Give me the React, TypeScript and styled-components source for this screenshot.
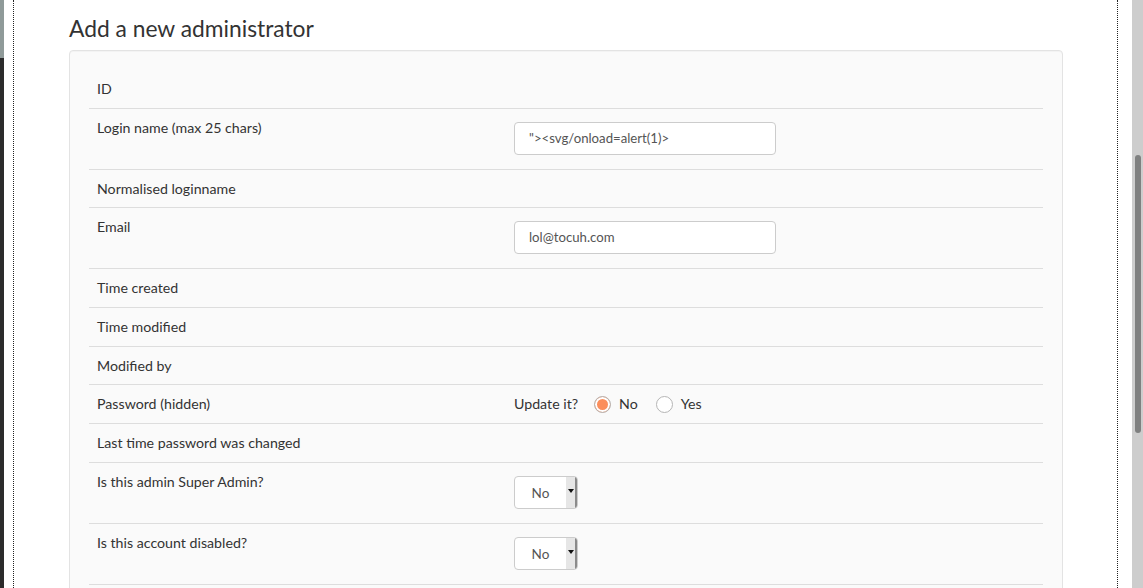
import React from "react";
import styled, { createGlobalStyle } from "styled-components";

const Global = createGlobalStyle`
  html, body { margin: 0; padding: 0; background: #fff; }
  body { font-family: Lato, "Liberation Sans", sans-serif; color: #333; overflow: hidden; }
  * { box-sizing: border-box; }
`;

const Screen = styled.div`
  display: flex;
  height: 588px;
  overflow: hidden;
`;

const LeftStrip = styled.div`
  width: 4px;
  flex: none;
  background: linear-gradient(#8f9a99 0 58px, #2b2b2b 58px 100%);
`;

const Gutter = styled.div<{ $w: number }>`
  width: ${(p) => p.$w}px;
  flex: none;
`;

const Frame = styled.div`
  flex: 1;
  border-left: 1px dotted #222;
  border-right: 1px dotted #222;
  padding: 12px 54px 0 55px;
  min-width: 0;
`;

const Scrollbar = styled.div`
  width: 11px;
  flex: none;
  background: #cdcdcd;
  padding: 155px 2px 0 3px;
`;

const Thumb = styled.div`
  height: 278px;
  background: #7f8080;
  border-radius: 3px;
`;

const Title = styled.h1`
  margin: 0 0 6px;
  font-size: 22.8px;
  line-height: 32px;
  font-weight: 400;
  color: #333;
`;

const Panel = styled.div`
  background: #fafafa;
  border: 1px solid #e3e3e3;
  border-radius: 4px;
  padding: 19px 19px 19px;
  box-shadow: inset 0 1px 1px rgba(0, 0, 0, 0.03);
`;

const Row = styled.div`
  display: grid;
  grid-template-columns: 417px 1fr;
  border-bottom: 1px solid #dddddd;
  font-size: 14.2px;
  line-height: 21.68px;
`;

const Label = styled.div`
  padding: 8px;
  color: #333;
`;

const Value = styled.div`
  padding: 8px;
  display: flex;
  align-items: flex-start;
`;

const TextInput = styled.div`
  margin: 5px 0 6px;
  width: 262px;
  height: 33px;
  border: 1px solid #cccccc;
  border-radius: 4px;
  background: #fff;
  padding: 0 14px;
  font-size: 13.2px;
  line-height: 31px;
  color: #555;
  white-space: nowrap;
`;

const Select = styled.div`
  margin: 5px 0 6px;
  width: 64px;
  height: 33px;
  border: 1px solid #cccccc;
  border-radius: 4px;
  background: #fff;
  display: flex;
  overflow: hidden;
`;

const SelectText = styled.span`
  flex: 1;
  text-align: center;
  font-size: 13.5px;
  line-height: 32px;
  color: #555;
`;

const SelectArrow = styled.span`
  width: 11px;
  background: #e6e6e6;
  border-right: 2px solid #8a8a8a;
  display: flex;
  justify-content: center;
  padding-top: 12px;
  &::after {
    content: "";
    border-left: 3px solid transparent;
    border-right: 3px solid transparent;
    border-top: 4px solid #111;
    height: 0;
  }
`;

const RadioGroup = styled.div`
  display: flex;
  align-items: center;
  color: #333;
`;

const Prompt = styled.span`
  margin-right: 16px;
`;

const Radio = styled.span<{ $checked?: boolean }>`
  width: 17px;
  height: 17px;
  border-radius: 50%;
  border: 1px solid #b5b5b5;
  background: ${(p) => (p.$checked ? "#fb8e5c" : "#fff")};
  box-shadow: ${(p) => (p.$checked ? "inset 0 0 0 2px #fff" : "none")};
  margin-right: 8px;
  flex: none;
`;

const RadioLabel = styled.span`
  margin-right: 18px;
`;

type RowDef = { label: string; kind?: "input" | "select" | "radio"; value?: string };

const rows: RowDef[] = [
  { label: "ID" },
  { label: "Login name (max 25 chars)", kind: "input", value: '"><svg/onload=alert(1)>' },
  { label: "Normalised loginname" },
  { label: "Email", kind: "input", value: "lol@tocuh.com" },
  { label: "Time created" },
  { label: "Time modified" },
  { label: "Modified by" },
  { label: "Password (hidden)", kind: "radio" },
  { label: "Last time password was changed" },
  { label: "Is this admin Super Admin?", kind: "select", value: "No" },
  { label: "Is this account disabled?", kind: "select", value: "No" },
];

function renderValue(r: RowDef) {
  if (r.kind === "input") return <TextInput>{r.value}</TextInput>;
  if (r.kind === "select")
    return (
      <Select>
        <SelectText>{r.value}</SelectText>
        <SelectArrow />
      </Select>
    );
  if (r.kind === "radio")
    return (
      <RadioGroup>
        <Prompt>Update it?</Prompt>
        <Radio $checked />
        <RadioLabel>No</RadioLabel>
        <Radio />
        <RadioLabel>Yes</RadioLabel>
      </RadioGroup>
    );
  return null;
}

export default function App() {
  return (
    <Screen>
      <Global />
      <LeftStrip />
      <Gutter $w={9} />
      <Frame>
        <Title>Add a new administrator</Title>
        <Panel>
          {rows.map((r) => (
            <Row key={r.label}>
              <Label>{r.label}</Label>
              <Value>{renderValue(r)}</Value>
            </Row>
          ))}
        </Panel>
      </Frame>
      <Gutter $w={14} />
      <Scrollbar>
        <Thumb />
      </Scrollbar>
    </Screen>
  );
}
